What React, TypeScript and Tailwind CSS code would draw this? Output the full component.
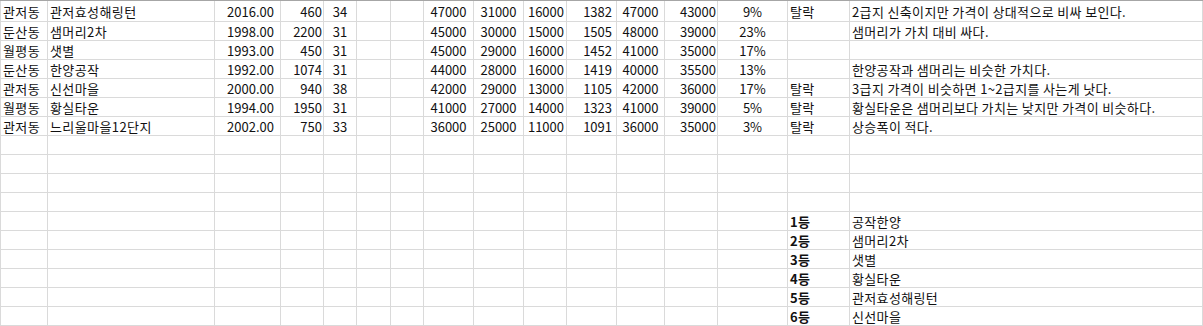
const columns = [
  "pl-[2px] justify-start border-l tracking-[0.4px]",
  "pl-[2px] justify-start tracking-[0.4px]",
  "pr-[6px] justify-end",
  "pr-[1px] justify-end",
  "justify-center",
  "justify-center",
  "justify-center",
  "justify-center",
  "justify-center",
  "pr-[2px] justify-end",
  "pr-[4px] justify-end",
  "justify-center",
  "pr-[1px] justify-end",
  "justify-center",
  "pl-[2px] justify-start tracking-[0.4px]",
  "pl-[2px] justify-start tracking-[0.35px]",
];

type Row = string[];

const dataRows: Row[] = [
  ["관저동", "관저효성해링턴", "2016.00", "460", "34", "", "", "47000", "31000", "16000", "1382", "47000", "43000", "9%", "탈락", "2급지 신축이지만 가격이 상대적으로 비싸 보인다."],
  ["둔산동", "샘머리2차", "1998.00", "2200", "31", "", "", "45000", "30000", "15000", "1505", "48000", "39000", "23%", "", "샘머리가 가치 대비 싸다."],
  ["월평동", "샛별", "1993.00", "450", "31", "", "", "45000", "29000", "16000", "1452", "41000", "35000", "17%", "", ""],
  ["둔산동", "한양공작", "1992.00", "1074", "31", "", "", "44000", "28000", "16000", "1419", "40000", "35500", "13%", "", "한양공작과 샘머리는 비슷한 가치다."],
  ["관저동", "신선마을", "2000.00", "940", "38", "", "", "42000", "29000", "13000", "1105", "42000", "36000", "17%", "탈락", "3급지 가격이 비슷하면 1~2급지를 사는게 낫다."],
  ["월평동", "황실타운", "1994.00", "1950", "31", "", "", "41000", "27000", "14000", "1323", "41000", "39000", "5%", "탈락", "황실타운은 샘머리보다 가치는 낮지만 가격이 비슷하다."],
  ["관저동", "느리울마을12단지", "2002.00", "750", "33", "", "", "36000", "25000", "11000", "1091", "36000", "35000", "3%", "탈락", "상승폭이 적다."],
];

const ranking = ["공작한양", "샘머리2차", "샛별", "황실타운", "관저효성해링턴", "신선마을"];

const emptyRow = (): Row => Array(16).fill("");

const rows: { cells: Row; boldRank?: boolean }[] = [
  ...dataRows.map((cells) => ({ cells })),
  ...Array.from({ length: 4 }, () => ({ cells: emptyRow() })),
  ...ranking.map((name, i) => {
    const cells = emptyRow();
    cells[14] = `${i + 1}등`;
    cells[15] = name;
    return { cells, boldRank: true };
  }),
];

export default function App() {
  return (
    <div
      className="h-[326px] w-[1203px] overflow-hidden bg-white text-[13px] text-[#111]"
      style={{ fontFamily: '"Noto Sans CJK KR", "Noto Sans", sans-serif' }}
    >
      <div className="grid grid-cols-[48px_167px_66px_43px_33px_34px_33px_50px_50px_43px_50px_48px_53px_70px_62px_1fr] border-t border-[#a6a6a6]">
        {rows.map((row, r) =>
          row.cells.map((cell, c) => (
            <div
              key={`${r}-${c}`}
              className={`flex items-center overflow-visible whitespace-nowrap border-r border-b border-[#dadada] leading-none ${
                r === 0 ? "h-[21px]" : "h-[19px]"
              } ${columns[c]} ${row.boldRank && c === 14 ? "font-bold" : ""}`}
            >
              {cell}
            </div>
          )),
        )}
      </div>
    </div>
  );
}
